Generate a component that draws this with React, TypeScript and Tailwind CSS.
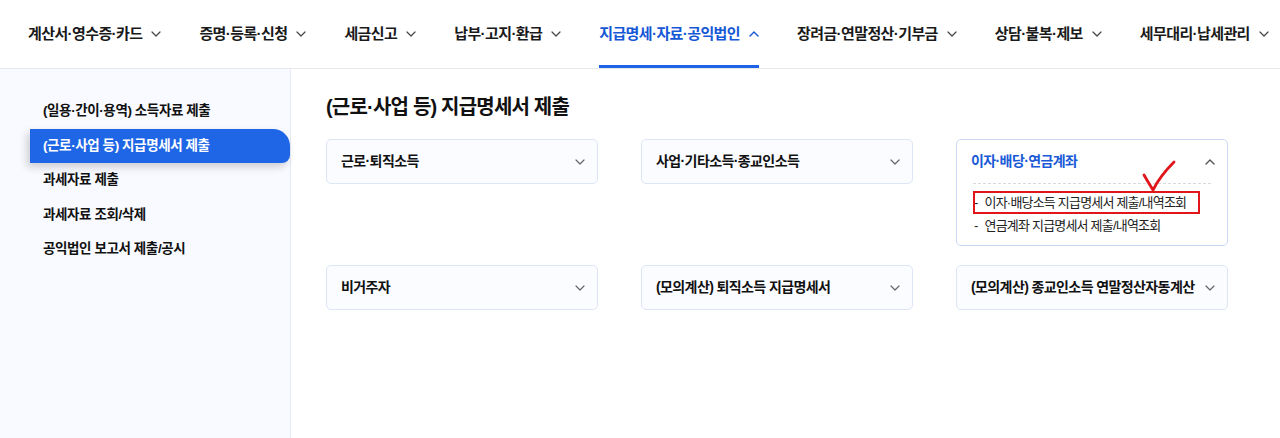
import React from "react";

const Down = ({ c = "#333" }: { c?: string }) => (
  <svg width="10" height="6" viewBox="0 0 10 6" fill="none">
    <path d="M1 1l4 4 4-4" stroke={c} strokeWidth="1.2" strokeLinecap="round" strokeLinejoin="round" />
  </svg>
);
const Up = ({ c = "#333" }: { c?: string }) => (
  <svg width="10" height="6" viewBox="0 0 10 6" fill="none">
    <path d="M1 5l4-4 4 4" stroke={c} strokeWidth="1.4" strokeLinecap="round" strokeLinejoin="round" />
  </svg>
);

const nav = [
  "계산서·영수증·카드",
  "증명·등록·신청",
  "세금신고",
  "납부·고지·환급",
  "지급명세·자료·공익법인",
  "장려금·연말정산·기부금",
  "상담·불복·제보",
  "세무대리·납세관리",
];

const side = [
  "(일용·간이·용역) 소득자료 제출",
  "(근로·사업 등) 지급명세서 제출",
  "과세자료 제출",
  "과세자료 조회/삭제",
  "공익법인 보고서 제출/공시",
];

function Card({ title }: { title: string }) {
  return (
    <div className="h-[45px] rounded-[5px] border border-[#dde6f6] bg-[#fbfcff] flex items-center justify-between pl-[14px] pr-[12px]">
      <span className="text-[14px] font-semibold tracking-[-0.6px] text-[#111] whitespace-nowrap">{title}</span>
      <Down c="#666" />
    </div>
  );
}

export default function App() {
  return (
    <div className="w-[1280px] h-[438px] overflow-hidden bg-white text-[#111] font-['Liberation_Sans','Noto_Sans_CJK_KR',sans-serif] flex flex-col">
      <header className="h-[69px] shrink-0 border-b border-[#e6e8ec] flex items-stretch pl-[28px] gap-[38px]">
        {nav.map((n, i) => {
          const active = i === 4;
          return (
            <div
              key={n}
              className={
                "flex shrink-0 items-center gap-[9px] border-b-[3px] pt-[3px] " +
                (active ? "border-[#1f64e6] text-[#1558d6]" : "border-transparent text-[#1a1a1a]")
              }
            >
              <span className="text-[15px] font-semibold tracking-[-0.6px] whitespace-nowrap">{n}</span>
              {active ? <Up c="#1558d6" /> : <Down c="#444" />}
            </div>
          );
        })}
      </header>
      <div className="flex flex-1">
        <aside className="w-[291px] shrink-0 bg-[#f8faff] border-r border-[#e4ebf7] pt-[25px]">
          {side.map((s, i) => {
            const active = i === 1;
            return (
              <div
                key={s}
                className={
                  "h-[34.5px] flex items-center text-[13.5px] font-semibold tracking-[-0.4px] whitespace-nowrap " +
                  (active
                    ? "ml-[30px] pl-[13px] bg-[#1f66e6] text-white rounded-tr-[17px] rounded-br-[8px] shadow-[-3px_4px_8px_rgba(0,0,0,0.18)]"
                    : "pl-[43px] text-[#111]")
                }
              >
                {s}
              </div>
            );
          })}
        </aside>
        <main className="flex-1 pl-[35px] pt-[24px]">
          <h1 className="text-[20px] leading-[28px] font-bold tracking-[-0.8px] text-[#111]">(근로·사업 등) 지급명세서 제출</h1>
          <div className="mt-[18px] grid grid-cols-[272px_272px_272px] gap-x-[43px] gap-y-[19px] items-start">
            <Card title="근로·퇴직소득" />
            <Card title="사업·기타소득·종교인소득" />
            <div className="relative rounded-[5px] border border-[#c9d8f3] bg-white">
              <div className="h-[43px] flex items-center justify-between pl-[14px] pr-[12px]">
                <span className="text-[14px] font-semibold tracking-[-0.6px] text-[#1a5ad7]">이자·배당·연금계좌</span>
                <Up c="#555" />
              </div>
              <div className="mx-[16px] border-t border-dashed border-[#d5d9e0]" />
              <div className="px-[17px] pt-[7px] pb-[8px] text-[13px] tracking-[-0.8px] text-[#222] leading-[23px]">
                <div className="flex gap-[7px]"><span>-</span><span>이자·배당소득 지급명세서 제출/내역조회</span></div>
                <div className="flex gap-[7px]"><span>-</span><span>연금계좌 지급명세서 제출/내역조회</span></div>
              </div>
              <div className="absolute left-[16px] top-[51px] w-[227px] h-[23px] border-2 border-[#e0161b]" />
              <svg className="absolute left-[185px] top-[20px]" width="36" height="33" viewBox="0 0 36 33" fill="none">
                <path d="M2 15 Q6 22 11 30 Q18 16 32 2" stroke="#e0161b" strokeWidth="2.8" strokeLinecap="round" strokeLinejoin="round" />
              </svg>
            </div>
            <Card title="비거주자" />
            <Card title="(모의계산) 퇴직소득 지급명세서" />
            <Card title="(모의계산) 종교인소득 연말정산자동계산" />
          </div>
        </main>
      </div>
    </div>
  );
}
